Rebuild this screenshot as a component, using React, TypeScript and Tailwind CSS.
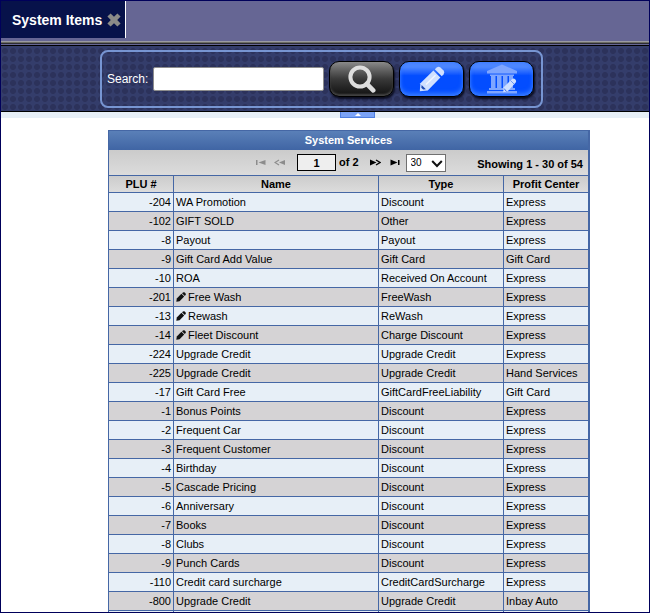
import type { ReactNode } from "react";

type Item = {
  plu: number;
  name: string;
  type: string;
  center: string;
  editable?: boolean;
};

const ITEMS: Item[] = [
  { plu: -204, name: "WA Promotion", type: "Discount", center: "Express" },
  { plu: -102, name: "GIFT SOLD", type: "Other", center: "Express" },
  { plu: -8, name: "Payout", type: "Payout", center: "Express" },
  { plu: -9, name: "Gift Card Add Value", type: "Gift Card", center: "Gift Card" },
  { plu: -10, name: "ROA", type: "Received On Account", center: "Express" },
  { plu: -201, name: "Free Wash", type: "FreeWash", center: "Express", editable: true },
  { plu: -13, name: "Rewash", type: "ReWash", center: "Express", editable: true },
  { plu: -14, name: "Fleet Discount", type: "Charge Discount", center: "Express", editable: true },
  { plu: -224, name: "Upgrade Credit", type: "Upgrade Credit", center: "Express" },
  { plu: -225, name: "Upgrade Credit", type: "Upgrade Credit", center: "Hand Services" },
  { plu: -17, name: "Gift Card Free", type: "GiftCardFreeLiability", center: "Gift Card" },
  { plu: -1, name: "Bonus Points", type: "Discount", center: "Express" },
  { plu: -2, name: "Frequent Car", type: "Discount", center: "Express" },
  { plu: -3, name: "Frequent Customer", type: "Discount", center: "Express" },
  { plu: -4, name: "Birthday", type: "Discount", center: "Express" },
  { plu: -5, name: "Cascade Pricing", type: "Discount", center: "Express" },
  { plu: -6, name: "Anniversary", type: "Discount", center: "Express" },
  { plu: -7, name: "Books", type: "Discount", center: "Express" },
  { plu: -8, name: "Clubs", type: "Discount", center: "Express" },
  { plu: -9, name: "Punch Cards", type: "Discount", center: "Express" },
  { plu: -110, name: "Credit card surcharge", type: "CreditCardSurcharge", center: "Express" },
  { plu: -800, name: "Upgrade Credit", type: "Upgrade Credit", center: "Inbay Auto" },
];

function CloseIcon() {
  return (
    <svg viewBox="0 0 14 14" className="size-3.5" aria-hidden="true">
      <path d="M3.6 0.4 7 3.8 10.4 0.4 13.6 3.6 10.2 7 13.6 10.4 10.4 13.6 7 10.2 3.6 13.6 0.4 10.4 3.8 7 0.4 3.6Z" fill="#8b8b88" />
    </svg>
  );
}

function SearchIcon() {
  return (
    <svg viewBox="0 0 28 28" className="size-7" aria-hidden="true">
      <circle cx="12" cy="12" r="9.6" fill="none" stroke="#dedede" strokeWidth="4" />
      <path d="M18.8 18.8 25.2 25.4" stroke="#dedede" strokeWidth="4.6" strokeLinecap="round" />
    </svg>
  );
}

function PencilIcon() {
  return (
    <svg viewBox="0 0 26 26" className="size-[26px]" aria-hidden="true">
      <path d="M0.8 25.2 1.4 17.2 14.4 4.6 21.4 11.6 8.8 24.6Z" fill="#d0e0ff" />
      <path d="M15.8 3.2 17.8 1.4Q19.6 0 21.4 1.4L24.6 4.6Q26 6.400 24.6 8.2L22.8 10.2Z" fill="#d0e0ff" />
      <path d="M2.6 19 6.900 23.200 4.2 23.6 2.3 21.800Z" fill="#1c49b4" />
      <path d="M7 18.600 16.500 9.200" stroke="#f2f6ff" strokeWidth="1.4" />
    </svg>
  );
}

function BankIcon() {
  return (
    <svg viewBox="0 0 32 30" className="h-[30px] w-8" aria-hidden="true">
      <g fill="#7fa6ff">
        <path d="M16 0.500 31 7V9.500H1V7Z" />
        <path d="M4 10.500H28V12H4ZM5 12h4.500V24H5ZM11 12h4.500V24H11ZM17 12h4.500V24H17ZM23 12h4V24h-4Z" />
        <path d="M3 24H29V26H3ZM1 27H31V29.500H1Z" />
      </g>
      <path d="M17.200 28.300 17.700 23.300 25.800 15.200Q27.500 13.800 29.200 15.300 30.900 17 29.500 18.800L21.800 27.300Z" fill="#cfdfff" />
      <path d="M24.500 16.500 28.200 20.200" stroke="#5585ee" strokeWidth="0.8" />
      <path d="M18.300 25 20.500 27.200" stroke="#2358dc" />
    </svg>
  );
}

function RowPencil() {
  return (
    <svg viewBox="0 0 10 10" className="mr-0.5 inline-block size-[10px] align-[-1px]" aria-hidden="true">
      <path d="M0.3 9.7 0.8 6.4 5.4 1.800 8.200 4.600 3.6 9.200Z" fill="#111" />
      <path d="M6 1.2 7 0.4Q8 -0.2 8.800 0.6L9.4 1.2Q10.200 2 9.6 3L8.800 4Z" fill="#111" />
    </svg>
  );
}

function ToolButton({ label, dark, children }: { label: string; dark?: boolean; children: ReactNode }) {
  const tone = dark
    ? "bg-linear-to-b from-[#8a8a8a] via-[#393939] to-[#111] shadow-[inset_0_-2px_2px_#444,1px_2px_2px_#0b0d20]"
    : "bg-linear-to-b from-[#4c86ff] from-15% via-[#034dff] via-40% to-[#034dff] shadow-[inset_0_-3px_4px_#3478ff,inset_0_0_3px_#3478ff,1px_2px_2px_#0b0d20]";
  return (
    <button
      type="button"
      aria-label={label}
      className={`flex h-9 w-[65px] shrink-0 items-center justify-center rounded-[10px] border border-black ${tone}`}
    >
      {children}
    </button>
  );
}

function PagerButton({ label, disabled, children }: { label: string; disabled?: boolean; children: ReactNode }) {
  return (
    <button type="button" aria-label={label} disabled={disabled} className="text-black disabled:text-[#8c8c8c]">
      <svg viewBox="0 0 11 7" className="h-[7px] w-[11px]" fill="currentColor" aria-hidden="true">
        {children}
      </svg>
    </button>
  );
}

function Toolbar() {
  return (
    <div className="shrink-0 border-b border-black bg-[#343d6b] bg-[radial-gradient(circle_at_center,#2c325b_0,#2c325b_2.6px,transparent_3.4px)] bg-[size:8px_8px] bg-[position:0_1px] pt-1 pb-[3px]">
      <form
        className="mr-[106px] ml-[99px] flex h-[58px] items-center rounded-lg border-2 border-[#7795d2] pr-[7px] pl-[5px]"
        onSubmit={(e) => e.preventDefault()}
      >
        <label htmlFor="search" className="mr-[5px] text-xs text-white">
          Search:
        </label>
        <input
          id="search"
          type="text"
          className="h-6 min-w-0 flex-1 rounded-xs border border-[#8d8d8d] bg-white px-1 text-xs text-black"
        />
        <div className="ml-[5px] flex gap-[5px]">
          <ToolButton label="Search" dark>
            <SearchIcon />
          </ToolButton>
          <ToolButton label="Edit">
            <PencilIcon />
          </ToolButton>
          <ToolButton label="Edit profit center">
            <BankIcon />
          </ToolButton>
        </div>
      </form>
    </div>
  );
}

function Pager() {
  return (
    <div className="flex h-[25px] items-center bg-linear-to-b from-[#cbcbcb] to-[#dcdcdc] pr-[5px] pl-[146px] font-bold">
      <div className="flex gap-2">
        <PagerButton label="First page" disabled>
          <path d="M1 1h1.500v5H1ZM10.500 1v5L3.500 3.500Z" />
        </PagerButton>
        <PagerButton label="Previous page" disabled>
          <path d="M5 1 1 3.500 5 6" fill="none" stroke="currentColor" strokeWidth="1.2" />
          <path d="M11 1v5L5 3.500Z" />
        </PagerButton>
      </div>
      <input
        aria-label="Page"
        defaultValue="1"
        className="ml-3 h-[17px] w-[39px] border border-black bg-[#eee] text-center font-bold"
      />
      <span className="ml-[3px]">of 2</span>
      <div className="ml-[11px] flex gap-[9px]">
        <PagerButton label="Next page">
          <path d="M0 0.500v6L6.500 3.500Z" />
          <path d="M6 1 10 3.500 6 6" fill="none" stroke="currentColor" strokeWidth="1.4" />
        </PagerButton>
        <PagerButton label="Last page">
          <path d="M0.500 0.500v6L7.500 3.500ZM8 1h1.500v5H8Z" />
        </PagerButton>
      </div>
      <div className="relative ml-[5px]">
        <select
          aria-label="Rows per page"
          defaultValue="30"
          className="block h-[18px] w-10 appearance-none border border-[#707070] bg-white pl-1 text-[10px] font-normal"
        >
          <option>30</option>
          <option>50</option>
        </select>
        <svg viewBox="0 0 12 8" className="pointer-events-none absolute top-[6px] right-[3px] h-2 w-3" aria-hidden="true">
          <path d="M1.200 1 6 6 10.800 1" fill="none" stroke="#111" strokeWidth="2" />
        </svg>
      </div>
      <span className="ml-auto pt-1 whitespace-nowrap">Showing 1 - 30 of 54</span>
    </div>
  );
}

export default function App() {
  const cell = "h-[19px] border-t border-r border-[#4567a5] p-0 px-0.5 leading-[18px] whitespace-nowrap";
  const head = "h-[17px] border-t border-r border-[#4567a5] p-0 text-center font-bold leading-4";

  return (
    <div className="flex h-screen flex-col overflow-hidden border border-[#00005a] bg-white font-['Liberation_Sans',Arial,sans-serif] text-[11px] text-black">
      <header className="h-10 shrink-0 bg-[#666694]">
        <div className="flex h-[37px] w-fit items-center gap-[5px] border-r border-white bg-[#07124a] pr-1 pl-[11px] text-sm font-bold text-white">
          System Items
          <button type="button" aria-label="Close tab">
            <CloseIcon />
          </button>
        </div>
      </header>
      <div className="shrink-0">
        <div className="h-px bg-[#9a9aa2]" />
        <div className="h-px bg-[#6b6b62]" />
        <div className="h-px bg-[#2d2d35]" />
        <div className="h-px bg-[#666694]" />
        <div className="h-px bg-black" />
      </div>
      <Toolbar />
      <div className="flex h-1.5 shrink-0 bg-[#e7eff7]">
        <button
          type="button"
          aria-label="Collapse toolbar"
          className="ml-[339px] flex h-1.5 w-[35px] items-center justify-center border-x border-b border-[#4f7fe0] bg-[#7ba3f7]"
        >
          <svg viewBox="0 0 6 3" className="h-[3px] w-1.5" aria-hidden="true">
            <path d="M3 0 6 3H0Z" fill="#fff" />
          </svg>
        </button>
      </div>

      <main className="mt-3 mr-[59px] ml-[107px] shrink-0 border border-r-2 border-[#4567a5]">
        <h1 className="h-[19px] bg-linear-to-b from-[#5a80b8] to-[#4065a4] text-center leading-[19px] font-bold text-white">
          System Services
        </h1>
        <Pager />
        <table className="w-full table-fixed border-separate border-spacing-0">
          <colgroup>
            <col className="w-[65px]" />
            <col />
            <col className="w-[125px]" />
            <col className="w-[84px]" />
          </colgroup>
          <thead className="bg-linear-to-b from-[#cbcbcb] to-[#dcdcdc]">
            <tr>
              <th className={head}>PLU #</th>
              <th className={head}>Name</th>
              <th className={head}>Type</th>
              <th className={`${head} border-r-0`}>Profit Center</th>
            </tr>
          </thead>
          <tbody>
            {ITEMS.map((item, i) => (
              <tr key={i} className="odd:bg-[#e7eff7] even:bg-[#d5d3d5]">
                <td className={`${cell} text-right`}>{item.plu}</td>
                <td className={cell}>
                  {item.editable && <RowPencil />}
                  {item.name}
                </td>
                <td className={cell}>{item.type}</td>
                <td className={`${cell} border-r-0`}>{item.center}</td>
              </tr>
            ))}
          </tbody>
          <tfoot className="bg-[#e7eff7]">
            <tr>
              <td className={cell} />
              <td className={cell} />
              <td className={cell} />
              <td className={`${cell} border-r-0`} />
            </tr>
          </tfoot>
        </table>
      </main>
    </div>
  );
}
